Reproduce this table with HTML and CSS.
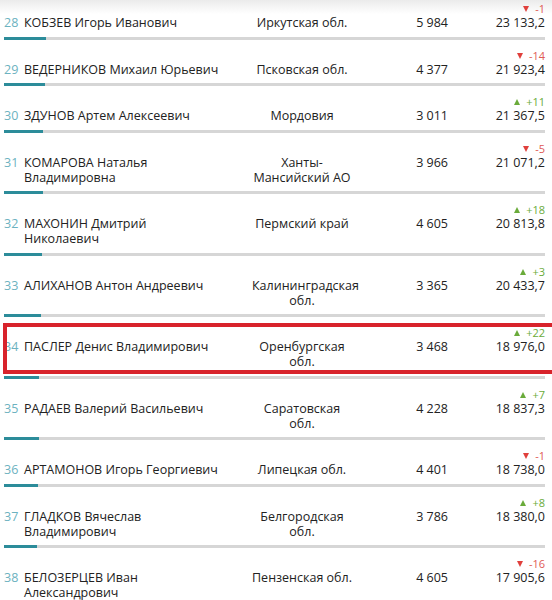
FILE: index.html
```html
<!DOCTYPE html>
<html lang="ru">
<head>
<meta charset="utf-8">
<title>Рейтинг</title>
<link rel="stylesheet" href="styles.css">
</head>
<body>
<div class="list">
  <div class="row">
    <div class="grid">
      <div class="rank">28</div>
      <div class="name">КОБЗЕВ Игорь Иванович</div>
      <div class="region">Иркутская обл.</div>
      <div class="count">5 984</div>
      <div class="score"><div class="chg down"><span class="tri"></span>-1</div><div class="val">23 133,2</div></div>
    </div>
    <div class="bar"><div class="fill" style="width:42px"></div></div>
  </div>
  <div class="row">
    <div class="grid">
      <div class="rank">29</div>
      <div class="name">ВЕДЕРНИКОВ Михаил Юрьевич</div>
      <div class="region">Псковская обл.</div>
      <div class="count">4 377</div>
      <div class="score"><div class="chg down"><span class="tri"></span>-14</div><div class="val">21 923,4</div></div>
    </div>
    <div class="bar"><div class="fill" style="width:41px"></div></div>
  </div>
  <div class="row">
    <div class="grid">
      <div class="rank">30</div>
      <div class="name">ЗДУНОВ Артем Алексеевич</div>
      <div class="region">Мордовия</div>
      <div class="count">3 011</div>
      <div class="score"><div class="chg up"><span class="tri"></span>+11</div><div class="val">21 367,5</div></div>
    </div>
    <div class="bar"><div class="fill" style="width:39px"></div></div>
  </div>
  <div class="row">
    <div class="grid">
      <div class="rank">31</div>
      <div class="name">КОМАРОВА Наталья<br>Владимировна</div>
      <div class="region">Ханты-<br>Мансийский АО</div>
      <div class="count">3 966</div>
      <div class="score"><div class="chg down"><span class="tri"></span>-5</div><div class="val">21 071,2</div></div>
    </div>
    <div class="bar"><div class="fill" style="width:39px"></div></div>
  </div>
  <div class="row">
    <div class="grid">
      <div class="rank">32</div>
      <div class="name">МАХОНИН Дмитрий<br>Николаевич</div>
      <div class="region">Пермский край</div>
      <div class="count">4 605</div>
      <div class="score"><div class="chg up"><span class="tri"></span>+18</div><div class="val">20 813,8</div></div>
    </div>
    <div class="bar"><div class="fill" style="width:38px"></div></div>
  </div>
  <div class="row">
    <div class="grid">
      <div class="rank">33</div>
      <div class="name">АЛИХАНОВ Антон Андреевич</div>
      <div class="region">Калининградская<br>обл.</div>
      <div class="count">3 365</div>
      <div class="score"><div class="chg up"><span class="tri"></span>+3</div><div class="val">20 433,7</div></div>
    </div>
    <div class="bar"><div class="fill" style="width:37px"></div></div>
  </div>
  <div class="row highlighted">
    <div class="grid">
      <div class="rank">34</div>
      <div class="name">ПАСЛЕР Денис Владимирович</div>
      <div class="region">Оренбургская<br>обл.</div>
      <div class="count">3 468</div>
      <div class="score"><div class="chg up"><span class="tri"></span>+22</div><div class="val">18 976,0</div></div>
    </div>
    <div class="bar"><div class="fill" style="width:35px"></div></div>
    <div class="mark"></div>
  </div>
  <div class="row">
    <div class="grid">
      <div class="rank">35</div>
      <div class="name">РАДАЕВ Валерий Васильевич</div>
      <div class="region">Саратовская<br>обл.</div>
      <div class="count">4 228</div>
      <div class="score"><div class="chg up"><span class="tri"></span>+7</div><div class="val">18 837,3</div></div>
    </div>
    <div class="bar"><div class="fill" style="width:35px"></div></div>
  </div>
  <div class="row">
    <div class="grid">
      <div class="rank">36</div>
      <div class="name">АРТАМОНОВ Игорь Георгиевич</div>
      <div class="region">Липецкая обл.</div>
      <div class="count">4 401</div>
      <div class="score"><div class="chg down"><span class="tri"></span>-1</div><div class="val">18 738,0</div></div>
    </div>
    <div class="bar"><div class="fill" style="width:34px"></div></div>
  </div>
  <div class="row">
    <div class="grid">
      <div class="rank">37</div>
      <div class="name">ГЛАДКОВ Вячеслав<br>Владимирович</div>
      <div class="region">Белгородская<br>обл.</div>
      <div class="count">3 786</div>
      <div class="score"><div class="chg up"><span class="tri"></span>+8</div><div class="val">18 380,0</div></div>
    </div>
    <div class="bar"><div class="fill" style="width:33px"></div></div>
  </div>
  <div class="row">
    <div class="grid">
      <div class="rank">38</div>
      <div class="name">БЕЛОЗЕРЦЕВ Иван<br>Александрович</div>
      <div class="region">Пензенская обл.</div>
      <div class="count">4 605</div>
      <div class="score"><div class="chg down"><span class="tri"></span>-16</div><div class="val">17 905,6</div></div>
    </div>
    <div class="bar"><div class="fill" style="width:32px"></div></div>
  </div>
</div>
</body>
</html>
```
FILE: styles.css
```css
html, body {
  margin: 0;
  padding: 0;
}
body {
  width: 552px;
  height: 600px;
  overflow: hidden;
  font-family: "Open Sans", "DejaVu Sans", sans-serif;
  font-size: 12.5px;
  color: #222222;
  background: linear-gradient(#ebebeb 0, #ffffff 14px) no-repeat, #ffffff;
}
.list {
  margin-top: -7px;
  padding-left: 4px;
  width: 541px;
}
.row {
  position: relative;
}
.grid {
  display: grid;
  grid-template-columns: 20px 208px 20px 100px 96px 97px;
  padding: 10px 0 6.5px;
  line-height: 15px;
}
.rank {
  grid-column: 1;
  padding-top: 12px;
  color: #6cb2c0;
}
.name {
  grid-column: 2;
  padding-top: 12px;
  white-space: nowrap;
}
.region {
  grid-column: 4;
  padding-top: 12px;
  text-align: center;
  white-space: nowrap;
}
.count {
  grid-column: 5;
  padding-top: 12px;
  text-align: right;
}
.score {
  grid-column: 6;
  text-align: right;
}
.chg {
  font-size: 11px;
  height: 12px;
  line-height: 12px;
  display: flex;
  justify-content: flex-end;
  align-items: center;
  gap: 6px;
}
.chg.down { color: #e05a55; }
.chg.up { color: #6aab3a; }
.tri {
  width: 0;
  height: 0;
  border-left: 3.5px solid transparent;
  border-right: 3.5px solid transparent;
}
.down .tri { border-top: 6px solid #e0403c; }
.up .tri { border-bottom: 6px solid #6aab3a; }
.val {
  height: 15px;
}
.bar {
  height: 3px;
  background: #d6d6d6;
}
.fill {
  height: 3px;
  background: #2c8c9a;
}
.mark {
  position: absolute;
  left: -1px;
  top: 6px;
  right: -30px;
  height: 51px;
  box-sizing: border-box;
  border: 4px solid #d8232b;
}
```
